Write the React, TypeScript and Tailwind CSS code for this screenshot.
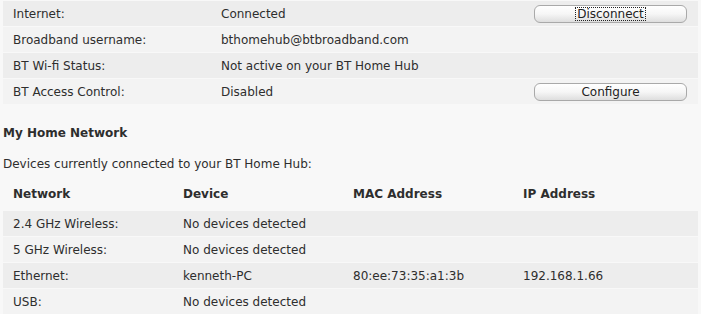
import React from "react"

type Row = {
 label: string
 value: string
 action?: string
 focused?: boolean
}

const status: Row[] = [
 { label: "Internet:", value: "Connected", action: "Disconnect", focused: true },
 { label: "Broadband username:", value: "bthomehub@btbroadband.com" },
 { label: "BT Wi-fi Status:", value: "Not active on your BT Home Hub" },
 { label: "BT Access Control:", value: "Disabled", action: "Configure" }
]

const devices = [
 ["2.4 GHz Wireless:", "No devices detected", "", ""],
 ["5 GHz Wireless:", "No devices detected", "", ""],
 ["Ethernet:", "kenneth-PC", "80:ee:73:35:a1:3b", "192.168.1.66"],
 ["USB:", "No devices detected", "", ""]
]

const headers = ["Network", "Device", "MAC Address", "IP Address"]

function HubButton({ label, focused }: { label: string; focused?: boolean }) {
 return (
  <button className="flex h-[18px] w-[153px] items-center justify-center rounded-[6px] border border-[#a9a9a9] bg-gradient-to-b from-white via-[#f6f6f6] to-[#dedede] text-[12px] leading-none text-[#222]">
   <span className={focused ? "outline-1 outline-dotted outline-[#222] px-px" : ""}>{label}</span>
  </button>
 )
}

export default function App() {
 return (
  <div
   className="h-[314px] w-[701px] overflow-hidden bg-[#f8f8f8] pt-px pl-[3px] text-[12px] text-[#2e2e2e]"
   style={{ fontFamily: "'DejaVu Sans', Verdana, sans-serif" }}
  >
   <div className="flex w-[695px] flex-col gap-px">
    {status.map((row, i) => (
     <div
      key={i}
      className={`flex h-[25px] items-center ${i % 2 === 0 ? "bg-[#ededed]" : "bg-[#f3f3f3]"}`}
     >
      <div className="w-[218px] pl-[10px]">{row.label}</div>
      <div className="w-[313px]">{row.value}</div>
      {row.action && <HubButton label={row.action} focused={row.focused} />}
     </div>
    ))}
   </div>

   <div className="mt-[17px] flex h-[24px] items-center font-bold">My Home Network</div>
   <div className="mt-[7px] flex h-[24px] items-center">Devices currently connected to your BT Home Hub:</div>

   <div className="mt-[5px] flex w-[695px] flex-col gap-px">
    <div className="mb-[4px] flex h-[25px] items-center pl-[10px] font-bold">
     {headers.map((h) => (
      <div key={h} className="w-[170px]">{h}</div>
     ))}
    </div>
    {devices.map((cells, i) => (
     <div
      key={i}
      className={`flex h-[25px] items-center pl-[10px] ${i % 2 === 0 ? "bg-[#ededed]" : "bg-[#f3f3f3]"}`}
     >
      {cells.map((c, j) => (
       <div key={j} className="w-[170px]">{c}</div>
      ))}
     </div>
    ))}
   </div>
  </div>
 )
}
